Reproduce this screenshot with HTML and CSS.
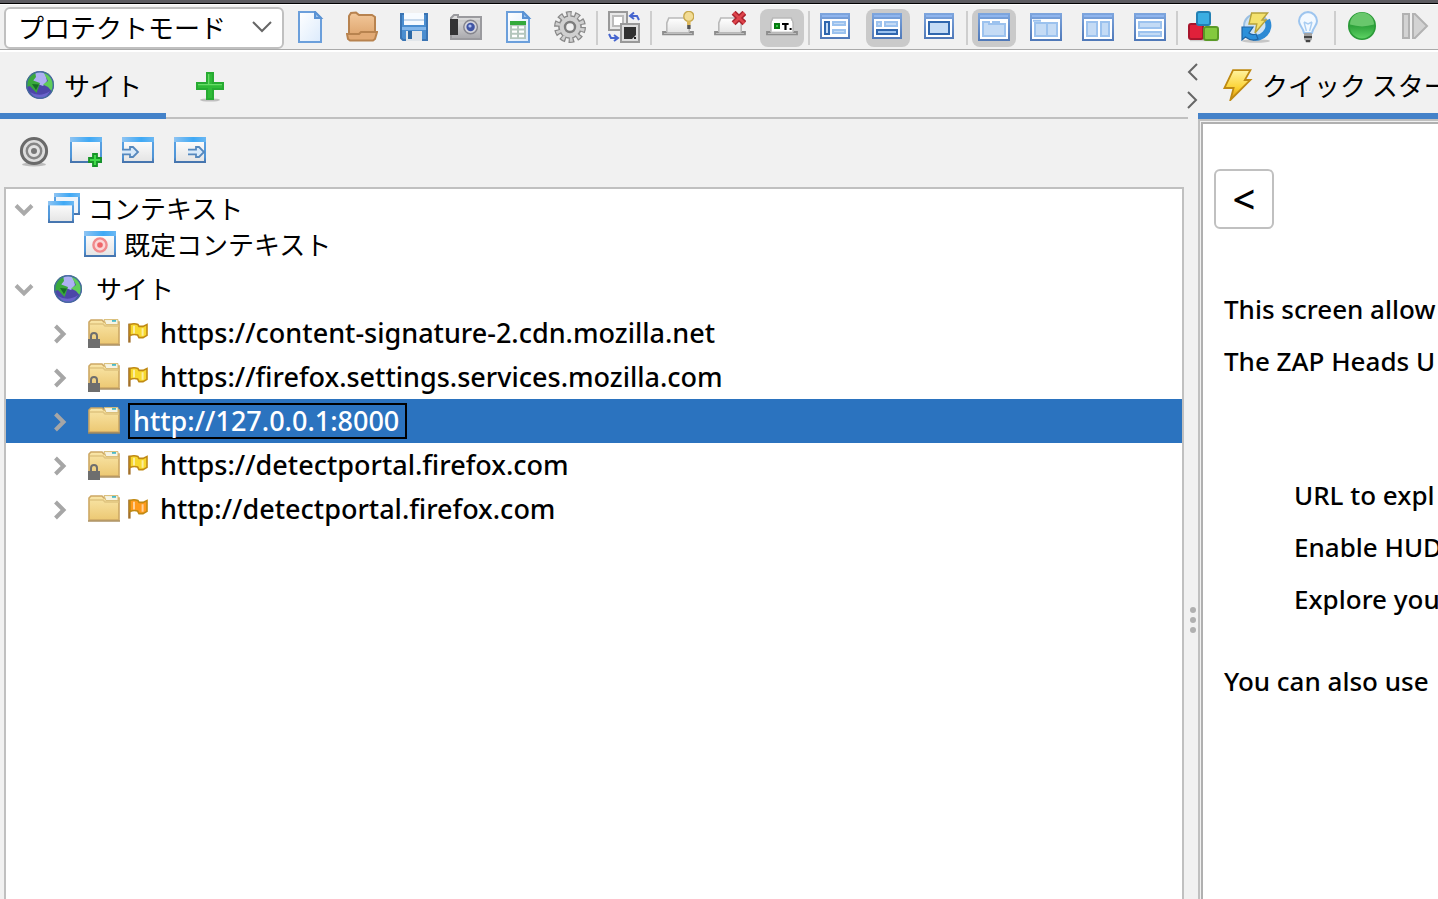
FILE: index.html
```
<!DOCTYPE html>
<html lang="ja">
<head>
<meta charset="utf-8">
<title>ZAP</title>
<link rel="stylesheet" href="styles.css">
</head>
<body>
<svg class="defs" aria-hidden="true">
  <defs>
    <linearGradient id="gPaper" x2="1" y2="1"><stop stop-color="#fff"/><stop offset="1" stop-color="#dcebfc"/></linearGradient>
    <linearGradient id="gBlue" x2="0" y2="1"><stop stop-color="#7ea6de"/><stop offset="1" stop-color="#4f78b8"/></linearGradient>
    <linearGradient id="gBar" x2="1"><stop stop-color="#8fc4f2"/><stop offset=".6" stop-color="#3fa9f5"/><stop offset="1" stop-color="#6bb8f3"/></linearGradient>
    <linearGradient id="gEdge" x2="0" y2="1"><stop stop-color="#5aa4e6"/><stop offset=".8" stop-color="#4f94d6"/><stop offset="1" stop-color="#4674ad"/></linearGradient>
    <linearGradient id="gWhite" x2="0" y2="1"><stop stop-color="#fff"/><stop offset="1" stop-color="#e4e4e4"/></linearGradient>
    <linearGradient id="gGray" x2="0" y2="1"><stop stop-color="#e2e2e2"/><stop offset="1" stop-color="#a9a9ad"/></linearGradient>
    <linearGradient id="gFolder" x2="0" y2="1"><stop stop-color="#f9e6a8"/><stop offset="1" stop-color="#ecc873"/></linearGradient>
    <linearGradient id="gOpen" x2="0" y2="1"><stop stop-color="#f3c99b"/><stop offset="1" stop-color="#dda36c"/></linearGradient>
    <linearGradient id="gBolt" x2="0" y2="1"><stop stop-color="#fff3a0"/><stop offset=".6" stop-color="#fbd233"/><stop offset="1" stop-color="#d98c05"/></linearGradient>
    <linearGradient id="gGreen" x2="0" y2="1"><stop stop-color="#2f9e3b"/><stop offset=".5" stop-color="#2fa33c"/><stop offset="1" stop-color="#5fd465"/></linearGradient>
    <symbol id="file" viewBox="0 0 16 16"><path d="M2.500.5h8l3 3v12h-11z" fill="url(#gPaper)" stroke="#6b9fdb"/><path d="M10.500.5v3h3z" fill="#9cc4ee" stroke="#5b93d4"/></symbol>
    <symbol id="open" viewBox="0 0 16 16"><path d="M1.500 13V2.500l1-1.500L5 .8 6.500 2H13l1.500 1v9z" fill="url(#gOpen)" stroke="#b8834f"/><path d="M.5 11.500h6l1-1h8l-1 3.500-1 .8H2L1 14z" fill="#e2aa75" stroke="#b8834f"/></symbol>
    <symbol id="save" viewBox="0 0 16 16"><path d="M1.500 1.500h13v13H2.500l-1-1z" fill="#4b8ed0" stroke="#3a74b3"/><path d="M3 1h10v6H3z" fill="#f7fbff"/><path d="M3 4h10v1H3z" fill="#c8daed"/><path d="M2 8h12v1.500H2z" fill="#82b6ea"/><path d="M4 10h8v5H4z" fill="#e2e6ea"/><path d="M5 10h2v4H5z" fill="#2d68a5"/></symbol>
    <symbol id="camera" viewBox="0 0 16 16"><path d="M.5 3.500 2 2h2v1h11.500v11H.5z" fill="url(#gGray)" stroke="#9a9a9e"/><path d="M0 4h4v8H0z" fill="#343436"/><path d="M4 5h11" stroke="#ccc"/><circle cx="10.300" cy="8" r="3.400" fill="#d3d4dc" stroke="#85858d" stroke-width=".7"/><circle cx="10.300" cy="8" r="2.100" fill="#4055a4"/><circle cx="10" cy="7.500" r=".8" fill="#afc1f2"/></symbol>
    <symbol id="report" viewBox="0 0 16 16"><use href="#file"/><path d="M4 5h8v2H4z" fill="#33aa3b"/><path d="M4 7h8v7H4z" fill="#b4c6bd"/><path d="M5 7.600h2.500v1.200H5zm3.500 0H11v1.200H8.500zM5 9.700h2.500v1.200H5zm3.500 0H11v1.200H8.500zM5 11.900h2.500v1.200H5zm3.500 0H11v1.200H8.500z" fill="#fff"/></symbol>
    <symbol id="gear" viewBox="0 0 16 16"><circle cx="8" cy="8" r="6.400" fill="none" stroke="#888" stroke-width="3.200" stroke-dasharray="2.600 1.421"/><circle cx="8" cy="8" r="5.900" fill="#888"/><circle cx="8" cy="8" r="6.200" fill="none" stroke="#cfcfcf" stroke-width="2.400" stroke-dasharray="1.400 2.496" stroke-dashoffset="-.6"/><circle cx="8" cy="8" r="5.200" fill="#d0d0d0"/><circle cx="8" cy="8" r="2.500" fill="#f1f1f1" stroke="#7d7d7d" stroke-width="1.200"/></symbol>
    <symbol id="swap" viewBox="0 0 16 16"><path d="M.5.5h9v9h-9z" fill="#e8e8e8" stroke="#999"/><path d="M2.500 2.500h5v5h-5z" fill="#fff" stroke="#bbb"/><path d="M7 9h2v-2z" fill="#333"/><path d="M6.500 6.500h9v9h-9z" fill="#ddd" stroke="#999"/><path d="M8 8h6v4l-2 2H8z" fill="#303030"/><path d="M13 13h1v1h-1z" fill="#222"/><path d="M11 2.500h3.500l1 2M13 .8l-2 1.700 2 1.500M.5 11.500l1 2H5M3 12l2 1.500L3 15" fill="none" stroke="#4665cf"/></symbol>
    <symbol id="hat" viewBox="0 0 16 16"><path d="M.5 10.500h15v1.200H.5z" fill="#eee" stroke="#8d8d8d" stroke-width=".9"/><path d="M2.400 10.800V6l1-2.500h9.200l1 2.500v4.800z" fill="url(#gWhite)"/><path d="M2.400 10.500V6l1-2.500h9.200l1 2.500v4.500" fill="none" stroke="#b9b9b9" stroke-width=".8"/></symbol>
    <symbol id="hatBulb" viewBox="0 0 16 16"><use href="#hat"/><circle cx="13.400" cy="2.700" r="2.500" fill="#f2dc94" stroke="#c7a84d" stroke-width=".7"/><path d="M12.500 5h1.800v2h-1.800z" fill="#dcb75a"/><path d="M12.600 7h1.700v2h-1.700z" fill="#555"/></symbol>
    <symbol id="hatX" viewBox="0 0 16 16"><use href="#hat"/><path d="m9.800.9 5.400 5.200m0-5.200L9.800 6.100" stroke="#a9222d" stroke-width="2.800"/><path d="m9.800.9 5.400 5.200m0-5.200L9.800 6.100" stroke="#de454c" stroke-width="1.300"/></symbol>
    <symbol id="hatHud" viewBox="0 0 16 16"><use href="#hat"/><path d="M3 5h10v5H3z" fill="#fff"/><path d="M4.500 6.500h2v2h-2z" fill="#2ecc40" stroke="#087a12"/><path d="M8 6h3.300v1h-1v2.500H9.200V7H8zm3.800 2.500h1v1h-1z" fill="#000"/></symbol>
    <symbol id="win" viewBox="0 0 16 16"><path d="M0 1h15v13H0z" fill="url(#gBlue)"/><path d="M1 2h13v1H1z" fill="#8fb5ee"/><path d="M1 4h13v9H1z" fill="#fff"/></symbol>
    <symbol id="winL" viewBox="0 0 16 16"><use href="#win"/><path d="M2.500 5.500h2v6h-2z" fill="#c4dbf5" stroke="#2f66ae"/><path d="M6.500 5.500h6v1.500h-6zm0 4h6v1.500h-6z" fill="#c4dbf5" stroke="#9cc2ee"/></symbol>
    <symbol id="winB" viewBox="0 0 16 16"><use href="#win"/><path d="M2.500 5.500h2v2h-2zm4 0h6v2h-6z" fill="#c4dbf5" stroke="#9cc2ee"/><path d="M2.500 9.500h10v2h-10z" fill="#9cc2ee" stroke="#2f66ae"/></symbol>
    <symbol id="winF" viewBox="0 0 16 16"><use href="#win"/><path d="M2.500 5.500h10v6h-10z" fill="#c4dbf5" stroke="#2f66ae"/></symbol>
    <symbol id="wide" viewBox="0 0 16 16"><path d="M0 1h16v14H0z" fill="url(#gBlue)"/><path d="M1 2h14v1H1z" fill="#8fb5ee"/><path d="M1 4h14v10H1z" fill="#fff"/></symbol>
    <symbol id="wTab" viewBox="0 0 16 16"><use href="#wide"/><path d="M2.500 5.500h3v1h8v6h-11zM7 5.500h4" fill="#c4dbf5" stroke="#9cc2ee"/></symbol>
    <symbol id="wTabs" viewBox="0 0 16 16"><use href="#wide"/><path d="M1.500 4.900h4M2.500 6h11v6.500h-11zM8.500 6v6" fill="#c4dbf5" stroke="#9cc2ee"/></symbol>
    <symbol id="wCols" viewBox="0 0 16 16"><use href="#wide"/><path d="M2.500 5.500h5v7h-5zm7 0h4v7h-4z" fill="#c4dbf5" stroke="#9cc2ee"/></symbol>
    <symbol id="wRows" viewBox="0 0 16 16"><use href="#wide"/><path d="M2.500 5.500h11v3h-11zm0 5h11v2h-11z" fill="#c4dbf5" stroke="#9cc2ee"/></symbol>
    <symbol id="blocks" viewBox="0 0 16 16"><rect x="1" y="13.500" width="14" height="1.600" fill="#aaa" opacity=".5"/><rect x=".5" y="6.500" width="7" height="7.500" rx="1" fill="#e0203a" stroke="#a8152c"/><rect x="4.500" y=".5" width="6.500" height="6.500" rx="1" fill="#3aaee2" stroke="#2380b4"/><rect x="8" y="8" width="7" height="6.500" rx="1" fill="#84c93e" stroke="#5a9a26"/></symbol>
    <symbol id="refresh" viewBox="0 0 16 16"><ellipse cx="8" cy="15" rx="7" ry=".9" fill="#aaa" opacity=".6"/><circle cx="8" cy="7.500" r="6" fill="#cfe3f5" stroke="#9abfe2"/><path d="M13.600 4.500A6.200 6.200 0 0 1 6 13" fill="none" stroke="#2d8ad4" stroke-width="3"/><path d="M1 8v6.500L2.700 13Q6 15.500 9 14l-1-2.500q-2 .8-3.500-.5L6.500 8z" fill="#2c90da" stroke="#1e64a4" stroke-width=".6"/><path d="M5.800 1h8L11 4.500h2L7.500 11l.9-4.500H4.500z" fill="#f4e26e" stroke="#b5a23c" stroke-width=".7"/></symbol>
    <symbol id="bulb" viewBox="0 0 16 16"><path d="M8 .5a4.600 4.600 0 0 1 4.500 4.500c0 2.500-2 3-2.500 6H6C5.500 8 3.500 7.500 3.500 5A4.600 4.600 0 0 1 8 .5z" fill="#f3f9ff" stroke="#9dc5ef"/><path d="M6 5.500 7.200 10M10 5.500 8.800 10M6 5.500l2 1 2-1" fill="none" stroke="#a9cdf2" stroke-width=".7"/><path d="M6 11h4v3l-1 1.800H7L6 14z" fill="#a2a2a2"/><path d="M6 13h4M7 15h2" stroke="#444"/></symbol>
    <symbol id="green" viewBox="0 0 16 16"><circle cx="8" cy="7.500" r="6.600" fill="url(#gGreen)" stroke="#2b9a38" stroke-width=".8"/><path d="M2 6.800a6 6 0 0 1 12 0Q8 8.600 2 6.800z" fill="#69c76c"/></symbol>
    <symbol id="step" viewBox="0 0 16 16"><path d="M2.500 1.500h3v12h-3zm5 0h1l6 6-6 6h-1z" fill="#d3d3d3" stroke="#b2b2b2"/></symbol>
    <symbol id="globe" viewBox="0 0 16 16"><circle cx="8" cy="8" r="7" fill="#4c46a8"/><path d="M5 2q3-1.500 5.500 0l1 4-2 2.500L5.500 7 4 5z" fill="#aeb0f3"/><path d="M1.200 6.500Q2.300 2.800 5.600 1.500L6 4 4.600 5.800 8 7 6.300 12 3 8.500 1.300 9z" fill="#39a93c"/><path d="m9.500 1.200 3 1.300 2.300 4-.6 5L12 9l-2.500-1.200L12 6z" fill="#5fcd59"/><path d="m4 7.500 3.500.2-1.500 2.800z" fill="#176d28"/><path d="M3 11.500q5 3 10-.5l-2 3-3 .9-3-1z" fill="#6a64cc"/><circle cx="8" cy="8" r="6.600" fill="none" stroke="#416f9b" stroke-width=".6"/></symbol>
    <symbol id="plus" viewBox="0 0 16 16"><ellipse cx="8" cy="15" rx="5" ry=".8" fill="#aaa" opacity=".7"/><path d="M6.500 1.500h3v5h5v3h-5v5h-3v-5h-5v-3h5z" fill="#2fbb37" stroke="#27ab32"/><path d="M7.300 2v5M2 7.300h12" stroke="#68dc67" fill="none" stroke-width=".7"/></symbol>
    <symbol id="bolt" viewBox="0 0 16 16"><path d="M5.500.6h8.700L11.400 5.500h2.800L4.200 15.500l1.600-6H1.200z" fill="url(#gBolt)" stroke="#bf8a12" stroke-width=".9"/></symbol>
    <symbol id="target" viewBox="0 0 16 16"><ellipse cx="8" cy="14.700" rx="6" ry="1" fill="#999" opacity=".6"/><circle cx="8" cy="8" r="6.300" fill="#ddd" stroke="#6a6a6a" stroke-width="1.500"/><circle cx="8" cy="8" r="3.600" fill="#e2e2e2" stroke="#858585" stroke-width="1.200"/><circle cx="8" cy="8" r="1.500" fill="#777"/></symbol>
    <symbol id="pane" viewBox="0 0 16 16"><path d="M.5 1.500h15v12H.5z" fill="url(#gWhite)" stroke="url(#gEdge)"/><path d="M0 1h16v2.500H0z" fill="url(#gBar)"/></symbol>
    <symbol id="paneAdd" viewBox="0 0 16 16"><use href="#pane"/><path d="M11.500 9.500h2v2h2v2h-2v2h-2v-2h-2v-2h2z" fill="#42da4a" stroke="#169427" stroke-width=".9"/></symbol>
    <symbol id="arrow" viewBox="0 0 9 6"><path d="M0 1.800h4V.5h1.500L8 3 5.500 5.500H4V4.200H0" fill="#d9eafa" stroke="#5688bd" stroke-width=".9"/></symbol>
    <symbol id="paneIn" viewBox="0 0 16 16"><use href="#pane"/><use href="#arrow" x="0" y="5.500" width="9" height="6"/></symbol>
    <symbol id="paneOut" viewBox="0 0 16 16"><use href="#pane"/><use href="#arrow" x="7" y="5.500" width="9" height="6"/></symbol>
    <symbol id="contexts" viewBox="0 0 16 16"><path d="M3.500.5h12v10h-12z" fill="#eef4fa" stroke="url(#gEdge)"/><path d="M3 0h13v2H3z" fill="url(#gBar)"/><path d="M.5 4.500h12v10H.5z" fill="url(#gWhite)" stroke="url(#gEdge)"/><path d="M0 4h13v2.200H0z" fill="url(#gBar)"/></symbol>
    <symbol id="context" viewBox="0 0 16 16"><use href="#pane"/><circle cx="8" cy="8" r="3.300" fill="#fbd6d6" stroke="#f08a8c" stroke-width="1.200"/><circle cx="8" cy="8" r="1.400" fill="#ee6669"/></symbol>
    <symbol id="folder" viewBox="0 0 16 16"><path d="M.5 13.500V2.500l1-1H7l1 1h7.500v11z" fill="url(#gFolder)" stroke="#cda864" stroke-width=".8"/><path d="M8 1.300h7v2.500H9z" fill="#f6f4e4" stroke="#d8bb73" stroke-width=".5"/><path d="M12 1.500h2v.9h-2z" fill="#4bb9c6"/><path d="M1 3.500h6.500l1 1h7" fill="none" stroke="#dfc37f" stroke-width=".7"/><path d="M0 14h16" stroke="#a68a58" stroke-width=".7"/></symbol>
    <symbol id="locked" viewBox="0 0 16 16"><use href="#folder"/><path d="M1.500 11V9.500a1.500 1.500 0 0 1 3 0V11" fill="none" stroke="#6e6e6e"/><path d="M0 11h6v4.500H0z" fill="#6e6e6e"/></symbol>
    <symbol id="flag" viewBox="0 0 10 10"><path d="M.7.3v9.500" stroke="#a2702a" stroke-width="1.200"/><path d="M1 .8Q3 0 5 .8l.5.9h2L9.500.8v5.400L7.500 7.300h-2L4.800 6Q3 5.400 1 6.200z" fill="currentColor" stroke="#c08a14" stroke-width=".8"/><path d="M3 1.400v3.800M7.300 2.600v3.800" stroke="#fff" stroke-width="1" opacity=".55"/></symbol>
    <symbol id="down" viewBox="0 0 20 14"><path d="m2 2.500 8 8 8-8" fill="none" stroke="#aaa" stroke-width="4"/></symbol>
    <symbol id="right" viewBox="0 0 14 20"><path d="m2.500 2 8 8-8 8" fill="none" stroke="#a6a6a6" stroke-width="4"/></symbol>
  </defs>
</svg>
<div class="app">
  <div class="titlebar"></div>
  <header class="toolbar">
    <div class="mode">
      <select class="mode-select" aria-label="モード"><option>プロテクトモード</option></select>
      <svg class="mode-arrow" viewBox="0 0 20 12"><path d="m1 1 9 9 9-9" fill="none" stroke="#666" stroke-width="2"/></svg>
    </div>
    <div class="group">
      <button class="tool" aria-label="新規"><svg class="icon"><use href="#file"/></svg></button>
      <button class="tool" aria-label="開く"><svg class="icon"><use href="#open"/></svg></button>
      <button class="tool" aria-label="保存"><svg class="icon"><use href="#save"/></svg></button>
      <button class="tool" aria-label="スナップショット"><svg class="icon"><use href="#camera"/></svg></button>
      <button class="tool" aria-label="レポート"><svg class="icon"><use href="#report"/></svg></button>
      <button class="tool" aria-label="オプション"><svg class="icon"><use href="#gear"/></svg></button>
    </div>
    <div class="group">
      <button class="tool" aria-label="切り替え"><svg class="icon"><use href="#swap"/></svg></button>
    </div>
    <div class="group">
      <button class="tool" aria-label="ヒント"><svg class="icon"><use href="#hatBulb"/></svg></button>
      <button class="tool" aria-label="閉じる"><svg class="icon"><use href="#hatX"/></svg></button>
      <button class="tool on" aria-label="タブ名" aria-pressed="true"><svg class="icon"><use href="#hatHud"/></svg></button>
    </div>
    <div class="group">
      <button class="tool" aria-label="左に展開"><svg class="icon"><use href="#winL"/></svg></button>
      <button class="tool on" aria-label="下に展開" aria-pressed="true"><svg class="icon"><use href="#winB"/></svg></button>
      <button class="tool" aria-label="全体"><svg class="icon"><use href="#winF"/></svg></button>
    </div>
    <div class="group">
      <button class="tool on" aria-label="タブ" aria-pressed="true"><svg class="icon"><use href="#wTab"/></svg></button>
      <button class="tool" aria-label="タブを並べる"><svg class="icon"><use href="#wTabs"/></svg></button>
      <button class="tool" aria-label="左右"><svg class="icon"><use href="#wCols"/></svg></button>
      <button class="tool" aria-label="上下"><svg class="icon"><use href="#wRows"/></svg></button>
    </div>
    <div class="group">
      <button class="tool" aria-label="アドオン"><svg class="icon"><use href="#blocks"/></svg></button>
      <button class="tool" aria-label="更新"><svg class="icon"><use href="#refresh"/></svg></button>
      <button class="tool" aria-label="電球"><svg class="icon"><use href="#bulb"/></svg></button>
    </div>
    <div class="group">
      <button class="tool" aria-label="ブレーク"><svg class="icon"><use href="#green"/></svg></button>
      <button class="tool" aria-label="ステップ"><svg class="icon"><use href="#step"/></svg></button>
    </div>
  </header>
  <main class="workspace">
    <section class="sites">
      <div class="tabs">
        <button class="tab active"><svg class="icon"><use href="#globe"/></svg>サイト</button>
        <button class="tab-add" aria-label="追加"><svg class="icon"><use href="#plus"/></svg></button>
      </div>
      <div class="site-tools">
        <button class="tool" aria-label="スコープ"><svg class="icon"><use href="#target"/></svg></button>
        <button class="tool" aria-label="新規コンテキスト"><svg class="icon"><use href="#paneAdd"/></svg></button>
        <button class="tool" aria-label="インポート"><svg class="icon"><use href="#paneIn"/></svg></button>
        <button class="tool" aria-label="エクスポート"><svg class="icon"><use href="#paneOut"/></svg></button>
      </div>
      <div class="tree">
        <ul class="branch contexts">
          <li>
            <div class="row"><button class="toggle" aria-label="閉じる"><svg class="chev-down"><use href="#down"/></svg></button><svg class="icon"><use href="#contexts"/></svg><span class="name">コンテキスト</span></div>
            <ul class="branch">
              <li><div class="row child"><svg class="icon"><use href="#context"/></svg><span class="name">既定コンテキスト</span></div></li>
            </ul>
          </li>
        </ul>
        <ul class="branch">
          <li>
            <div class="row root"><button class="toggle" aria-label="閉じる"><svg class="chev-down"><use href="#down"/></svg></button><svg class="icon"><use href="#globe"/></svg><span class="name">サイト</span></div>
            <ul class="branch">
              <li><div class="row site"><button class="toggle" aria-label="開く"><svg class="chev-right"><use href="#right"/></svg></button><svg class="icon"><use href="#locked"/></svg><svg class="flag"><use href="#flag"/></svg><span class="url">https://content-signature-2.cdn.mozilla.net</span></div></li>
              <li><div class="row site"><button class="toggle" aria-label="開く"><svg class="chev-right"><use href="#right"/></svg></button><svg class="icon"><use href="#locked"/></svg><svg class="flag"><use href="#flag"/></svg><span class="url">https://firefox.settings.services.mozilla.com</span></div></li>
              <li><div class="row site selected"><button class="toggle" aria-label="開く"><svg class="chev-right"><use href="#right"/></svg></button><svg class="icon"><use href="#folder"/></svg><span class="url focus">http://127.0.0.1:8000</span></div></li>
              <li><div class="row site"><button class="toggle" aria-label="開く"><svg class="chev-right"><use href="#right"/></svg></button><svg class="icon"><use href="#locked"/></svg><svg class="flag"><use href="#flag"/></svg><span class="url">https://detectportal.firefox.com</span></div></li>
              <li><div class="row site"><button class="toggle" aria-label="開く"><svg class="chev-right"><use href="#right"/></svg></button><svg class="icon"><use href="#folder"/></svg><svg class="flag orange"><use href="#flag"/></svg><span class="url">http://detectportal.firefox.com</span></div></li>
            </ul>
          </li>
        </ul>
      </div>
    </section>
    <div class="splitter">
      <div class="split-buttons">
        <button class="split" aria-label="左へ"><svg class="split-icon" viewBox="0 0 12 18"><path d="m10 1-8 8 8 8" fill="none" stroke="#666" stroke-width="2"/></svg></button>
        <button class="split" aria-label="右へ"><svg class="split-icon" viewBox="0 0 12 18"><path d="m1 1 8 8-8 8" fill="none" stroke="#666" stroke-width="2"/></svg></button>
      </div>
      <div class="grip"><i class="dot"></i><i class="dot"></i><i class="dot"></i></div>
    </div>
    <section class="quick">
      <div class="tabs plain">
        <button class="tab active wide"><svg class="icon"><use href="#bolt"/></svg>クイック スター</button>
      </div>
      <div class="frame">
        <div class="page">
          <button class="back">&lt;</button>
          <div class="intro">
            <p class="line">This screen allow</p>
            <p class="line">The ZAP Heads U</p>
          </div>
          <div class="fields">
            <p class="line">URL to expl</p>
            <p class="line">Enable HUD</p>
            <p class="line">Explore you</p>
          </div>
          <p class="line">You can also use</p>
        </div>
      </div>
    </section>
  </main>
</div>
</body>
</html>
```
FILE: styles.css
```
* { box-sizing: border-box; }
body {
  margin: 0;
  background: #f1f1f1;
  color: #000;
  font: 26px/36px "Noto Sans", "Noto Sans CJK JP", sans-serif;
}
button { margin: 0; padding: 0; border: 0; background: none; font: inherit; color: inherit; }
ul { margin: 0; padding: 0; list-style: none; }
p { margin: 0; }
svg { display: block; flex: none; }
.defs { position: absolute; width: 0; height: 0; }
.icon { width: 32px; height: 32px; }

.app { display: flex; flex-direction: column; height: 100vh; overflow: hidden; }
.titlebar { flex: none; height: 4px; background: #5c5b60; border-bottom: 1px solid #000; }
.toolbar {
  flex: none;
  display: flex;
  align-items: center;
  height: 48px;
  padding: 3px 0 3px 4px;
  border-top: 1px solid #fff;
  border-bottom: 2px solid #fff;
  box-shadow: inset 0 -1px #aaa;
  overflow: hidden;
}
.mode { position: relative; flex: none; width: 280px; height: 42px; }
.mode-select {
  appearance: none;
  width: 100%;
  height: 100%;
  padding: 0 40px 4px 12px;
  border: 2px solid #c0c0c0;
  border-radius: 6px;
  background: #fff;
  color: #000;
  font: 26px/36px "Noto Sans CJK JP", sans-serif;
}
.mode-arrow { position: absolute; right: 12px; top: 14px; width: 20px; height: 12px; pointer-events: none; }
.group { flex: none; display: flex; align-items: center; }
.group + .group::before { content: ""; width: 2px; height: 34px; background: #cecece; }
.tool { flex: none; width: 44px; height: 38px; margin: 0 4px; padding: 2px 6px 4px; border-radius: 8px; }
.tool.on { background: #cacaca; }

.workspace { flex: 1; min-height: 0; display: flex; }
.sites { flex: 1188 1 0; min-width: 0; display: flex; flex-direction: column; }
.tabs { flex: none; display: flex; height: 67px; box-shadow: inset 0 -2px #c0c0c0; }
.tab {
  display: flex;
  align-items: center;
  gap: 8px;
  padding: 4px 24px 0;
  border-bottom: 6px solid #4482c9;
  font-family: "Noto Sans CJK JP", sans-serif;
  line-height: 32px;
  white-space: nowrap;
}
.tab-add { display: flex; align-items: center; padding: 0 28px; }
.site-tools { flex: none; display: flex; align-items: center; height: 68px; padding: 0 8px 2px; }
.tree {
  flex: 1;
  margin: 0 4px;
  padding-top: 2px;
  border: 2px solid #c0c0c0;
  border-bottom: 0;
  background: #fff;
  overflow: hidden;
}
.contexts { margin-bottom: 4px; }
.row { display: flex; align-items: center; gap: 8px; height: 36px; padding-left: 6px; white-space: nowrap; }
.row.child { padding-left: 78px; }
.row.root { height: 44px; }
.row.root .icon { margin: 0 4px; }
.row.site { height: 44px; padding-left: 42px; }
.toggle { display: flex; align-items: center; justify-content: center; width: 24px; height: 24px; padding-top: 2px; margin-right: 4px; }
.site .toggle { margin-right: 8px; }
.chev-down { width: 20px; height: 14px; }
.chev-right { width: 14px; height: 20px; }
.name { padding-bottom: 2px; font-family: "Noto Sans CJK JP", sans-serif; }
.flag { width: 20px; height: 20px; color: #f8d92e; }
.flag.orange { color: #ff9a1c; }
.url { margin-left: 4px; font-weight: 500; font-size: 27px; }
.selected { background: #2b73bf; color: #fff; }
.focus { margin: 0; padding: 0 6px 0 3px; border: 2px solid #000; line-height: 32px; }

.splitter { position: relative; flex: none; width: 10px; display: flex; flex-direction: column; align-items: center; justify-content: center; }
.split-buttons { position: absolute; top: 11px; left: -1px; display: grid; gap: 10px; }
.split { display: block; }
.split-icon { width: 12px; height: 18px; }
.grip { display: grid; gap: 4px; margin-top: 288px; }
.dot { width: 6px; height: 6px; border-radius: 50%; background: #b0b0b0; }

.quick { flex: 240 1 0; min-width: 0; display: flex; flex-direction: column; overflow: hidden; }
.tabs.plain { box-shadow: none; }
.tab.wide { flex: 1 0 auto; }
.frame { flex: 1; display: flex; padding: 1px 0 0 1px; border: solid #c0c0c0; border-width: 2px 0 0 2px; background: #f1f1f1; }
.page { flex: 1; min-width: 0; padding: 45px 0 0 11px; border: solid #b0b0b0; border-width: 2px 0 0 2px; background: #fff; overflow: hidden; }
.back { display: block; width: 60px; height: 60px; border: 2px solid #c0c0c0; border-radius: 6px; font-weight: 500; font-size: 40px; }
.intro { margin-top: 54px; }
.line { padding-left: 10px; line-height: 52px; white-space: nowrap; font-weight: 500; }
.fields { margin: 82px 0 30px; padding-left: 70px; }
```
